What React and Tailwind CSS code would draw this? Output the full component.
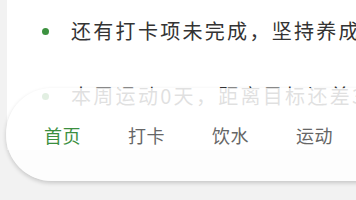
const tips = [
  "还有打卡项未完成，坚持养成好习惯",
  "本周运动0天，距离目标还差3天",
];

const tabs = ["首页", "打卡", "饮水", "运动", "我的"];

export default function App() {
  return (
    <div
      className="relative w-[356px] h-[200px] overflow-hidden bg-[#f2f2f2]"
      style={{ fontFamily: '"Noto Sans CJK SC", "Noto Sans", sans-serif' }}
    >
      <div className="ml-[7px] h-[150px] bg-white pt-[17px]">
        <ul className="flex flex-col gap-[37px]">
          {tips.map((t) => (
            <li key={t} className="flex items-center h-[28px] pl-[35px] gap-[22px] whitespace-nowrap">
              <span className="w-[7px] h-[7px] rounded-full bg-[#3c913f] shrink-0"></span>
              <span className="text-[20px] leading-[28px] tracking-[2.3px] text-[#333333]">{t}</span>
            </li>
          ))}
        </ul>
      </div>

      <nav className="absolute left-[6px] top-[88px] w-[420px] h-[93px] rounded-l-[46px] bg-white/85 shadow-[0_2px_4px_rgba(0,0,0,0.18)] flex items-center pl-[38px] gap-[47px]">
        {tabs.map((t, i) => (
          <span
            key={t}
            className={
              "text-[18px] leading-none tracking-[0.5px] whitespace-nowrap " +
              (i === 0 ? "text-[#3b8f3f]" : "text-[#666666]")
            }
          >
            {t}
          </span>
        ))}
      </nav>
    </div>
  );
}
